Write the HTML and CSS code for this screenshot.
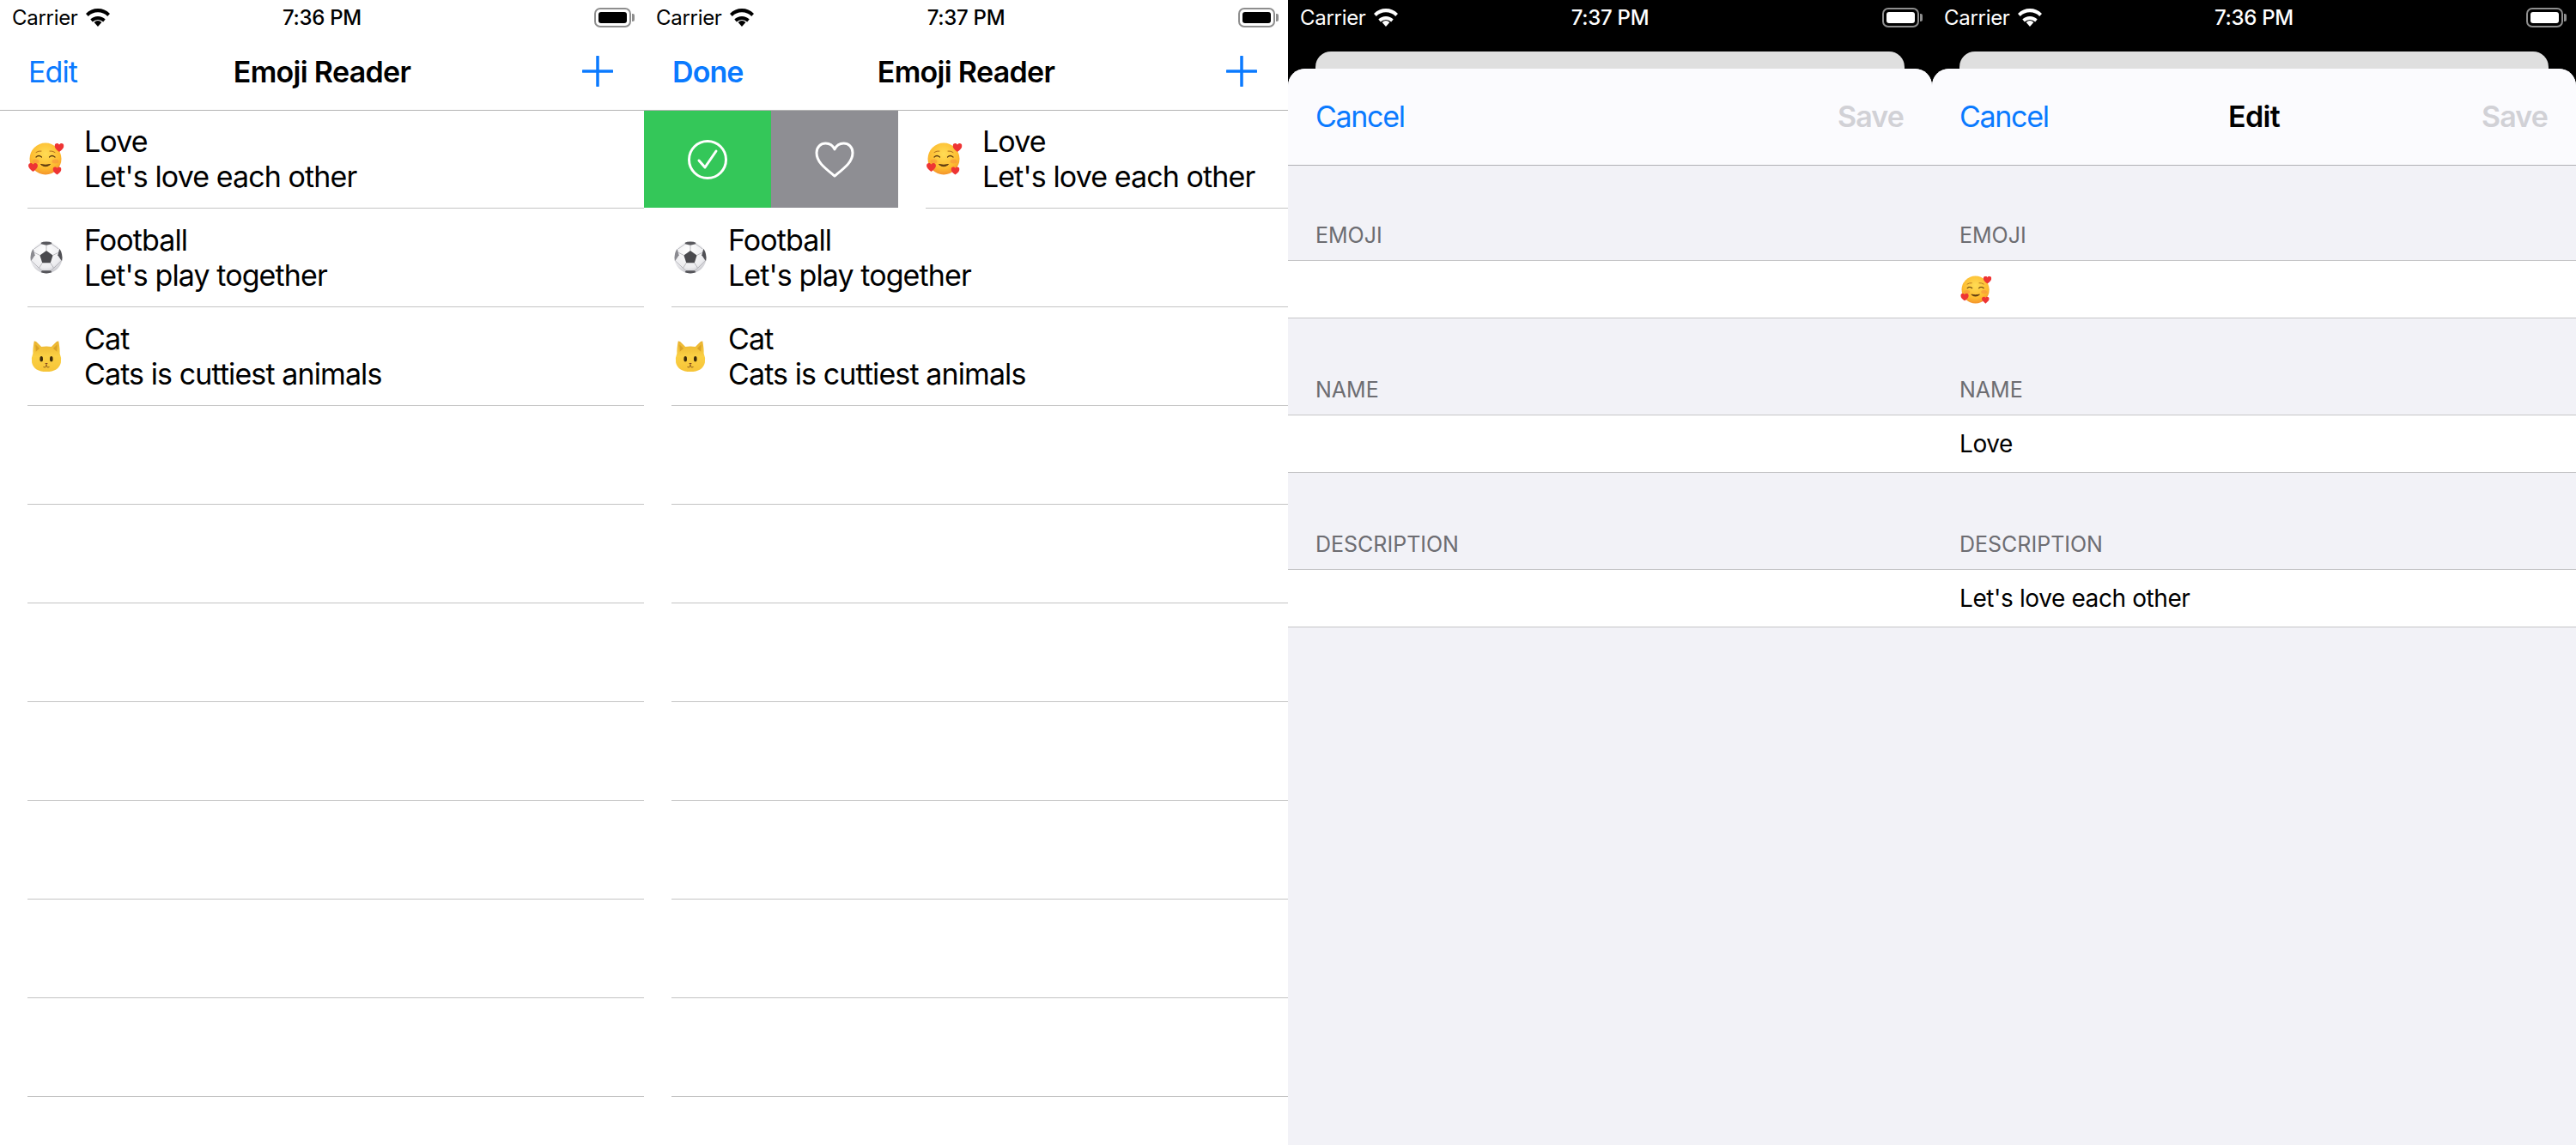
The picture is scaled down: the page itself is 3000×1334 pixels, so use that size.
FILE: index.html
```html
<!DOCTYPE html>
<html lang="en">
<head>
    <meta charset="UTF-8">
    <title>Emoji Reader</title>
    <link rel="stylesheet" href="styles.css">
</head>
<body>
    <svg class="defs" width="0" height="0">
        <defs>
            <radialGradient id="skin" cx="50%" cy="35%" r="70%">
                <stop offset="0" stop-color="#ffdc55"/>
                <stop offset="0.65" stop-color="#fdbc30"/>
                <stop offset="1" stop-color="#f28a2a"/>
            </radialGradient>
            <linearGradient id="fur" x1="0" y1="0" x2="0" y2="1">
                <stop offset="0" stop-color="#e9b22f"/>
                <stop offset="0.5" stop-color="#fbd044"/>
                <stop offset="1" stop-color="#f6c437"/>
            </linearGradient>
            <radialGradient id="leather" cx="45%" cy="30%" r="75%">
                <stop offset="0" stop-color="#ffffff"/>
                <stop offset="0.7" stop-color="#ececef"/>
                <stop offset="1" stop-color="#bcbcc2"/>
            </radialGradient>
            <clipPath id="ball-edge"><circle cx="20" cy="20" r="19.500"/></clipPath>
            <symbol id="heart-small" viewBox="0 0 24 22">
                <path d="M12 22C5 16 0 12 0 6.500C0 2.500 3 0 6.300 0C8.700 0 10.800 1.300 12 3.500C13.200 1.300 15.300 0 17.700 0C21 0 24 2.500 24 6.500C24 12 19 16 12 22Z" fill="#ee3434"/>
            </symbol>
            <symbol id="emoji-love" viewBox="0 0 42 38">
                <circle cx="20" cy="19" r="18.500" fill="url(#skin)"/>
                <path d="M9 17q3-3 6.500 0M24.500 17q3-3 6.500 0" fill="none" stroke="#5b3a10" stroke-width="1.200" stroke-linecap="round"/>
                <path d="M9 11.500q3-2 6-1.500M25 10q3-.5 6 1.500" fill="none" stroke="#a8661a" stroke-width=".9" stroke-linecap="round"/>
                <path d="M14.500 25.500q5.500 4.500 11 0q-5.500 1.500-11 0Z" fill="#5b3a10" stroke="#5b3a10" stroke-width="1" stroke-linejoin="round"/>
                <ellipse cx="8.500" cy="22" rx="4" ry="2.500" fill="#f58a3c" opacity=".5"/>
                <ellipse cx="31.500" cy="22" rx="4" ry="2.500" fill="#f58a3c" opacity=".5"/>
                <use href="#heart-small" x="30.500" y="1" width="11" height="10"/>
                <use href="#heart-small" x="0" y="24" width="11" height="10"/>
                <use href="#heart-small" x="28.500" y="28" width="10" height="10"/>
            </symbol>
            <symbol id="emoji-ball" viewBox="0 0 40 40">
                <circle cx="20" cy="20" r="19.500" fill="url(#leather)"/>
                <g clip-path="url(#ball-edge)">
                    <path d="M20 11.500l8 5.800-3 9.300H15l-3-9.300Z" fill="#4a4a4e"/>
                    <path d="M13 -1H27L26.500 3.500 20 5 13.500 3.500Z" fill="#5a5a5f"/>
                    <path d="M-1 13L4 9.500 6 17 1.500 24H-1Z" fill="#8a8a90"/>
                    <path d="M41 13L36 9.500 34 17 38.500 24H41Z" fill="#505055"/>
                    <path d="M12 41L14.500 36H25.500L28 41Z" fill="#55555a"/>
                    <path d="M20 5V11.500M12 17.300L5.500 14M28 17.300L34.500 14M15 26.600L11 33 14.500 36M25 26.600L29 33 25.500 36M1.500 24L11 33M38.500 24L29 33M13.500 3.500L5 9.500M26.500 3.500L35 9.500" stroke="#a6a6ac" stroke-width=".8" fill="none"/>
                </g>
            </symbol>
            <symbol id="emoji-cat" viewBox="0 0 34 36">
                <path d="M3.500 1.500Q4.500 1 6 2.200L11.500 7.500Q17 6.500 22.500 7.500L28 2.200Q29.500 1 30.500 1.500Q32 10 31.800 15Q34 20 33 25Q30.500 35 17 35Q3.500 35 1 25Q0 20 2.200 15Q2 10 3.500 1.500Z" fill="url(#fur)"/>
                <path d="M5 5l4.500 4.500-4.200 3.500ZM29 5l-4.500 4.500 4.200 3.500Z" fill="#d9a228"/>
                <ellipse cx="11.500" cy="21" rx="1.700" ry="3" fill="#3d2a0c"/>
                <ellipse cx="22.500" cy="21" rx="1.700" ry="3" fill="#3d2a0c"/>
                <path d="M15.300 25.500h3.400L17 27.500Z" fill="#8a4a20"/>
                <path d="M14 30q3 1.300 3-2.500q0 3.800 3 2.500" fill="none" stroke="#7a4a18" stroke-width=".8" stroke-linecap="round"/>
            </symbol>
            <symbol id="wifi" viewBox="0 0 28 21">
                <path d="M14 21L9.600 15.900Q14 12.300 18.400 15.900Z M14 9Q19.200 9 22.700 12.600L20.200 15.400Q17.500 12.900 14 12.900Q10.500 12.900 7.800 15.400L5.300 12.600Q8.800 9 14 9Z M14 0Q22 0 28 5.900L25.200 8.900Q20.500 4.300 14 4.300Q7.500 4.300 2.800 8.900L0 5.900Q6 0 14 0Z"/>
            </symbol>
        </defs>
    </svg>

    <div class="screens">
        <!-- list -->
        <section class="screen">
            <div class="status">
                <span class="carrier">Carrier</span>
                <svg class="wifi"><use href="#wifi"/></svg>
                <span class="time">7:36 PM</span>
                <span class="battery"><span class="battery-level"></span></span>
            </div>
            <header class="navbar">
                <span class="nav-btn">Edit</span>
                <span class="nav-title">Emoji Reader</span>
                <svg class="plus" viewBox="0 0 36 36"><path d="M18 1V35M1 18H35"/></svg>
            </header>
            <div class="list">
                <div class="row">
                    <svg class="emoji"><use href="#emoji-love"/></svg>
                    <div class="row-text"><div>Love</div><div>Let's love each other</div></div>
                </div>
                <div class="row">
                    <svg class="emoji"><use href="#emoji-ball"/></svg>
                    <div class="row-text"><div>Football</div><div>Let's play together</div></div>
                </div>
                <div class="row">
                    <svg class="emoji"><use href="#emoji-cat"/></svg>
                    <div class="row-text"><div>Cat</div><div>Cats is cuttiest animals</div></div>
                </div>
                <div class="row"></div><div class="row"></div><div class="row"></div><div class="row"></div><div class="row"></div><div class="row"></div><div class="row"></div>
            </div>
        </section>

        <!-- list, first row swiped -->
        <section class="screen">
            <div class="status">
                <span class="carrier">Carrier</span>
                <svg class="wifi"><use href="#wifi"/></svg>
                <span class="time">7:37 PM</span>
                <span class="battery"><span class="battery-level"></span></span>
            </div>
            <header class="navbar">
                <span class="nav-btn nav-btn-done">Done</span>
                <span class="nav-title">Emoji Reader</span>
                <svg class="plus" viewBox="0 0 36 36"><path d="M18 1V35M1 18H35"/></svg>
            </header>
            <div class="list">
                <div class="row-swiped">
                    <div class="action action-done">
                        <svg class="action-icon" viewBox="0 0 46 46"><circle cx="23" cy="23" r="21.500"/><path d="M13 24l7 8L33 13"/></svg>
                    </div>
                    <div class="action action-fav">
                        <svg class="action-icon" viewBox="0 0 46 42"><path d="M23 40C12 31 2 24 2 13C2 6 7 2 12.500 2C17 2 21 4.500 23 9C25 4.500 29 2 33.500 2C39 2 44 6 44 13C44 24 34 31 23 40Z"/></svg>
                    </div>
                    <div class="row">
                        <svg class="emoji"><use href="#emoji-love"/></svg>
                        <div class="row-text"><div>Love</div><div>Let's love each other</div></div>
                    </div>
                </div>
                <div class="row">
                    <svg class="emoji"><use href="#emoji-ball"/></svg>
                    <div class="row-text"><div>Football</div><div>Let's play together</div></div>
                </div>
                <div class="row">
                    <svg class="emoji"><use href="#emoji-cat"/></svg>
                    <div class="row-text"><div>Cat</div><div>Cats is cuttiest animals</div></div>
                </div>
                <div class="row"></div><div class="row"></div><div class="row"></div><div class="row"></div><div class="row"></div><div class="row"></div><div class="row"></div>
            </div>
        </section>

        <!-- add sheet -->
        <section class="screen screen-dark">
            <div class="status">
                <span class="carrier">Carrier</span>
                <svg class="wifi"><use href="#wifi"/></svg>
                <span class="time">7:37 PM</span>
                <span class="battery"><span class="battery-level"></span></span>
            </div>
            <div class="card-behind"></div>
            <div class="sheet">
                <header class="sheet-bar">
                    <span class="nav-btn nav-btn-cancel">Cancel</span>
                    <span class="sheet-title"></span>
                    <span class="nav-btn nav-btn-off">Save</span>
                </header>
                <div class="section-label">EMOJI</div>
                <div class="field"></div>
                <div class="section-label">NAME</div>
                <div class="field"></div>
                <div class="section-label">DESCRIPTION</div>
                <div class="field"></div>
            </div>
        </section>

        <!-- edit sheet -->
        <section class="screen screen-dark">
            <div class="status">
                <span class="carrier">Carrier</span>
                <svg class="wifi"><use href="#wifi"/></svg>
                <span class="time">7:36 PM</span>
                <span class="battery"><span class="battery-level"></span></span>
            </div>
            <div class="card-behind"></div>
            <div class="sheet">
                <header class="sheet-bar">
                    <span class="nav-btn nav-btn-cancel">Cancel</span>
                    <span class="sheet-title">Edit</span>
                    <span class="nav-btn nav-btn-off">Save</span>
                </header>
                <div class="section-label">EMOJI</div>
                <div class="field"><svg class="emoji-small"><use href="#emoji-love"/></svg></div>
                <div class="section-label">NAME</div>
                <div class="field">Love</div>
                <div class="section-label">DESCRIPTION</div>
                <div class="field">Let's love each other</div>
            </div>
        </section>
    </div>
</body>
</html>
```

FILE: styles.css
```css
* { box-sizing: border-box; }
html, body { margin: 0; height: 100%; overflow: hidden; }
body { font-family: Inter, "Liberation Sans", sans-serif; color: #000; background: #fff; }
.defs { position: absolute; }
.screens { display: grid; grid-template-columns: repeat(4, 750px); width: 3000px; height: 1334px; }
.screen { display: flex; flex-direction: column; height: 1334px; overflow: hidden; background: #fff; }
.screen-dark { background: #000; color: #fff; }

/* status bar */
.status { position: relative; display: flex; align-items: center; height: 40px; padding: 0 15px 0 14px; font-size: 24px; letter-spacing: -0.3px; flex-shrink: 0; }
.carrier { width: 86px; }
.wifi { width: 28px; height: 21px; fill: currentColor; }
.time { position: absolute; left: 0; right: 0; text-align: center; font-weight: 500; }
.battery { display: flex; margin-left: auto; width: 43px; height: 23px; padding: 3px; border: 2px solid #8e8e8e; border-radius: 7px; position: relative; }
.battery::after { content: ""; position: absolute; right: -6px; top: 5px; width: 3px; height: 9px; background: #8e8e8e; border-radius: 0 2px 2px 0; }
.battery-level { flex: 1; background: currentColor; border-radius: 3px; }

/* nav bar */
.navbar { position: relative; display: flex; align-items: center; justify-content: space-between; height: 89px; padding: 0 36px 2px 33px; border-bottom: 1px solid #b4b4b4; flex-shrink: 0; }
.nav-btn { font-size: 34px; letter-spacing: -0.9px; color: #0a7aff; }
.nav-btn-done { font-weight: 600; }
.nav-btn-cancel { letter-spacing: -1.3px; }
.nav-btn-off { color: #d1d1d6; font-weight: 600; }
.nav-title { position: absolute; left: 0; right: 0; text-align: center; font-size: 34px; font-weight: 600; letter-spacing: -0.7px; }
.plus { width: 36px; height: 36px; fill: none; stroke: #0a7aff; stroke-width: 3.5; stroke-linecap: round; }

/* table rows */
.list { flex: 1; }
.row { display: flex; align-items: center; height: 115px; margin-left: 32px; border-bottom: 1px solid #c4c4c4; padding-bottom: 1px; }
.row:first-child, .row-swiped { height: 114px; }
.row-text { margin-left: 23px; font-size: 34px; line-height: 41px; letter-spacing: -0.9px; white-space: nowrap; }
.emoji { width: 42px; height: 38px; margin-left: 1px; flex-shrink: 0; }

/* swipe actions */
.row-swiped { display: flex; }
.row-swiped .row { flex: 1; height: 114px; }
.action { display: flex; align-items: center; justify-content: center; width: 148px; height: 113px; }
.action-done { background: #34c759; }
.action-fav { background: #8e8e93; }
.action-icon { width: 46px; height: 42px; fill: none; stroke: #fff; stroke-width: 3; stroke-linecap: round; stroke-linejoin: round; }
.action-done .action-icon { height: 46px; }

/* modal sheet */
.card-behind { height: 40px; margin: 20px 32px -20px; background: #dfdfdf; border-radius: 18px 18px 0 0; flex-shrink: 0; }
.sheet { position: relative; flex: 1; background: #f2f2f7; border-radius: 20px 20px 0 0; color: #000; overflow: hidden; }
.sheet-bar { position: relative; display: flex; align-items: center; justify-content: space-between; height: 113px; padding: 0 33px 1px 32px; background: #fbfbfe; border-bottom: 1px solid #b0b0b5; }
.sheet-title { position: absolute; left: 0; right: 0; text-align: center; font-size: 34px; font-weight: 600; letter-spacing: -0.7px; }
.section-label { display: flex; align-items: flex-end; height: 110px; padding: 0 33px 14px 32px; font-size: 25px; color: #6d6d72; }
.section-label ~ .section-label { height: 112px; }
.field { display: flex; align-items: center; height: 68px; padding: 0 33px 0 32px; background: #fff; border-top: 1px solid #c6c6c8; border-bottom: 1px solid #c6c6c8; font-size: 28px; letter-spacing: -0.4px; }
.emoji-small { width: 37px; height: 33px; margin-left: 1px; }
```
